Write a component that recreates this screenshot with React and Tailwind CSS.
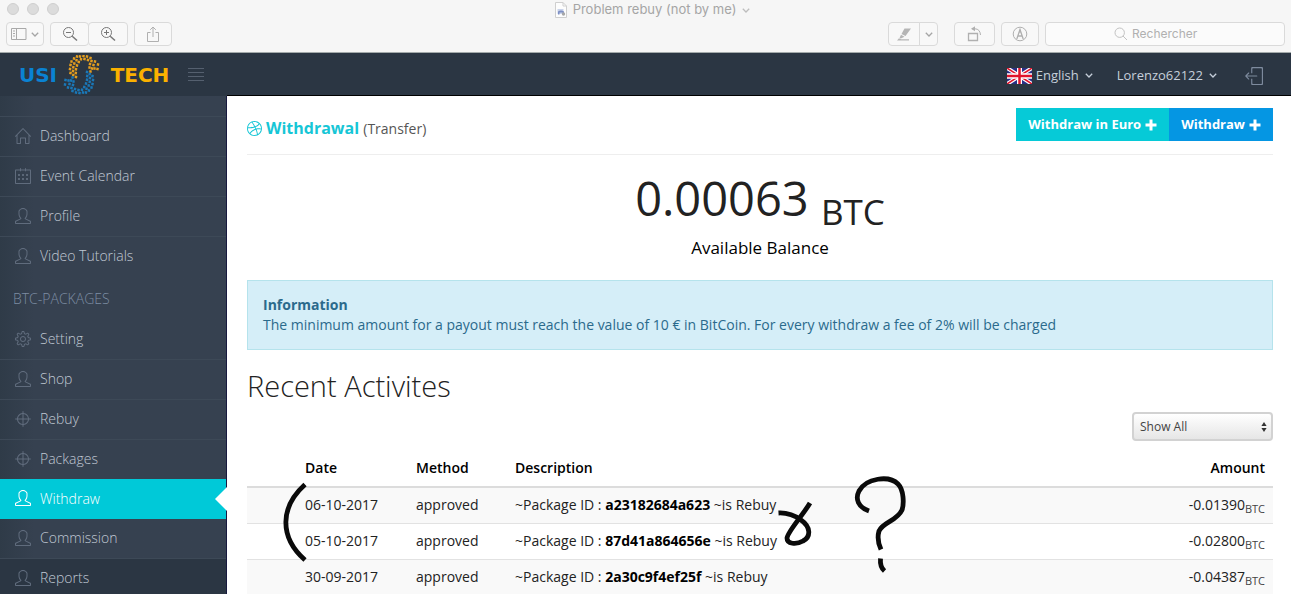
import React from "react";
import {
  SlHome, SlCalender, SlUser, SlSettings, SlTarget, SlSocialDribbble, SlLogout,
} from "react-icons/sl";

function ToolButton({ label, className, children }) {
  return (
    <button
      aria-label={label}
      className={`flex h-6 items-center justify-center rounded border border-[#dadada] bg-[#f8f8f8] ${className}`}
    >
      {children}
    </button>
  );
}

function Chevron({ className }) {
  return (
    <svg viewBox="0 0 8 5" className={`h-[5px] w-2 ${className || ""}`} fill="none" stroke="currentColor" strokeWidth="1.3">
      <path d="M0.8 0.8 L4 4 L7.2 0.8" />
    </svg>
  );
}

function Plus() {
  return (
    <svg viewBox="0 0 12 12" className="size-3" fill="currentColor">
      <path d="M4.500 0.500 h3 v4 h4 v3 h-4 v4 h-3 v-4 h-4 v-3 h4 z" />
    </svg>
  );
}

function WindowBar() {
  return (
    <header className="border-b border-[#a4abab] bg-[#f6f6f6] font-[Inter,sans-serif] text-[13px] text-[#a5a5a5]">
      <div className="flex h-[18px] items-center px-[7px]">
        <div className="flex flex-1 gap-2">
          <span className="size-3 rounded-full border border-[#cfcfcf] bg-[#dcdcdc]" />
          <span className="size-3 rounded-full border border-[#cfcfcf] bg-[#dcdcdc]" />
          <span className="size-3 rounded-full border border-[#cfcfcf] bg-[#dcdcdc]" />
        </div>
        <div className="flex items-center gap-1.5 pl-3.5 pt-0.5">
          <svg viewBox="0 0 12 16" className="h-4 w-3">
            <path d="M0.5 0.5 H8 L11.5 4 V15.500 H0.5 Z" fill="#fdfdfd" stroke="#cfcfcf" />
            <path d="M8 0.500 V4 H11.500" fill="none" stroke="#cfcfcf" />
            <path d="M2.500 7 h6 v5 h-6 z" fill="#c9d3ea" />
            <path d="M3 9.500 q3 -2 6 0 v2 h-1.500 v-1 h-3 v2 h-1.500 z" fill="#7d8fc4" />
            <circle cx="8.500" cy="12" r="1.700" fill="#a8a8a8" />
          </svg>
          <span>Problem rebuy (not by me)</span>
          <Chevron className="text-[#bdbdbd]" />
        </div>
        <div className="flex-1" />
      </div>
      <div className="flex h-[34px] items-start px-1.5 pt-1">
        <ToolButton label="Sidebar" className="w-[38px] gap-1">
          <svg viewBox="0 0 16 12" className="h-3 w-4" fill="none" stroke="#a9a9a9">
            <path d="M0.5 0.500 h14.500 v11 h-14.500 z M5.500 0.500 v11 M2 3 h2 M2 5.500 h2 M2 8 h2" />
          </svg>
          <Chevron />
        </ToolButton>
        <div className="ml-1.5 flex">
          <ToolButton label="Zoom out" className="w-[39px]">
            <svg viewBox="0 0 16 16" className="size-4" fill="none" stroke="#777">
              <circle cx="6.500" cy="6.500" r="5" /><path d="M4 6.500 h5" /><path d="M10.200 10.200 L15 14.500" strokeWidth="1.500" />
            </svg>
          </ToolButton>
          <ToolButton label="Zoom in" className="-ml-px w-10">
            <svg viewBox="0 0 16 16" className="size-4" fill="none" stroke="#777">
              <circle cx="6.500" cy="6.500" r="5" /><path d="M4 6.500 h5 M6.500 4 v5" /><path d="M10.200 10.200 L15 14.500" strokeWidth="1.500" />
            </svg>
          </ToolButton>
        </div>
        <ToolButton label="Share" className="ml-1.5 w-[38px]">
          <svg viewBox="0 0 12 16" className="h-4 w-3" fill="none" stroke="#b0b0b0">
            <path d="M3.500 6.500 H0.500 V15.500 H11.500 V6.500 H8.500 M6 11 V1.200 M3.200 3.800 L6 1 L8.800 3.800" />
          </svg>
        </ToolButton>
        <div className="flex-1" />
        <div className="flex">
          <ToolButton label="Highlight" className="w-8 rounded-r-none">
            <svg viewBox="0 0 16 13" className="h-[13px] w-4" fill="#b5b5b5">
              <path d="M8.500 0.500 H15 L9.500 8 L5.500 6 Z M5 6.800 L8.500 8.700 L4.800 10.500 L3.600 9.800 Z M3 10.300 L5 11.200 H13 V12.500 H1 Z" />
            </svg>
          </ToolButton>
          <ToolButton label="Highlight colours" className="-ml-px w-[19px] rounded-l-none">
            <Chevron />
          </ToolButton>
        </div>
        <ToolButton label="Rotate" className="ml-4 w-[41px]">
          <svg viewBox="0 0 16 16" className="size-4" fill="none" stroke="#b0b0b0">
            <path d="M1.500 7.500 h9 v7 h-9 z" strokeWidth="1.300" />
            <path d="M5 2.800 H8 Q13 3 13.500 9" />
            <path d="M4 2.800 L8 0.300 V5.300 Z" fill="#b0b0b0" stroke="none" />
          </svg>
        </ToolButton>
        <ToolButton label="Annotate" className="ml-1.5 w-[38px]">
          <svg viewBox="0 0 16 16" className="size-4" fill="none" stroke="#b0b0b0">
            <circle cx="8" cy="8" r="6.800" />
            <path d="M4.800 13 L8 3.500 L11.200 13 M6 10 H10" strokeWidth="1.300" />
            <path d="M6.800 6.500 L8 3 L9.200 6.500 Z" fill="#b0b0b0" stroke="none" />
          </svg>
        </ToolButton>
        <label className="ml-1.5 flex h-6 w-60 items-center justify-center gap-1 rounded border border-[#dadada] bg-[#fbfbfb]">
          <svg viewBox="0 0 14 14" className="size-3.5" fill="none" stroke="#c2c2c2">
            <circle cx="5.700" cy="5.700" r="4.700" /><path d="M9 9 L13 13" />
          </svg>
          <input aria-label="Rechercher" placeholder="Rechercher" className="w-[84px] bg-transparent text-[12px] outline-none placeholder:text-[#b0b0b0]" />
        </label>
      </div>
    </header>
  );
}

const swirl = [
  [70.5, 71], [70, 67], [70.5, 63], [71.5, 59.5], [74, 56.5], [77, 54.5],
  [73.3, 73], [73, 69], [73.3, 65.2], [74.3, 61.5], [76.5, 58.2], [80, 54.5],
  [76, 75], [75.8, 71], [76, 67.3], [77, 63.5], [78.8, 60], [81, 57.2],
  [83.500, 54], [87, 54.500], [90.500, 56], [84.500, 57], [88, 58], [91.500, 59], [95, 59.500],
  [90, 62], [93.500, 63], [98, 62.500], [97.500, 67], [92, 66.500], [89.500, 65.500], [90.500, 69.500], [94.500, 66.500],
];

function Swirl({ fill, transform }) {
  return (
    <g fill={fill} transform={transform}>
      {swirl.map(([x, y], i) => (
        <rect key={i} x={x - 1.2} y={y - 1.3} width="2.4" height="2.6" transform={`rotate(10 ${x} ${y})`} />
      ))}
    </g>
  );
}

function Logo() {
  return (
    <a href="#" aria-label="USI TECH" className="flex h-[43px] items-center font-['DejaVu_Sans',sans-serif] text-[20px] font-bold leading-none">
      <span className="w-11 text-center text-[#0a82d2]">USI</span>
      <svg viewBox="62 53 40 40" className="ml-0.5 size-10">
        <Swirl fill="#e39d1f" />
        <Swirl fill="#1a78b8" transform="rotate(180 81.5 72.500)" />
      </svg>
      <span className="w-[76px] text-center text-[#fbb100]">TECH</span>
    </a>
  );
}

function Flag() {
  return (
    <svg viewBox="0 0 60 36" preserveAspectRatio="none" className="h-4 w-[25px]">
      <rect width="60" height="36" fill="#2a2f86" />
      <path d="M0 0 L60 36 M60 0 L0 36" stroke="#fff" strokeWidth="9" />
      <path d="M0 0 L60 36 M60 0 L0 36" stroke="#e0142c" strokeWidth="3.500" />
      <path d="M30 0 V36 M0 18 H60" stroke="#fff" strokeWidth="12" />
      <path d="M30 0 V36 M0 18 H60" stroke="#e0142c" strokeWidth="6" />
    </svg>
  );
}

function TopBar() {
  return (
    <div className="flex h-[43px] items-center bg-[#2b3643] pl-4 text-[13px] text-[#c6cfda]">
      <Logo />
      <button aria-label="Toggle menu" className="ml-2.5 flex w-4 flex-col gap-[3px]">
        <span className="h-px w-full bg-[#55606f]" />
        <span className="h-px w-full bg-[#55606f]" />
        <span className="h-px w-full bg-[#55606f]" />
        <span className="h-px w-full bg-[#55606f]" />
      </button>
      <div className="ml-auto flex items-center pr-7 pt-0.5">
        <button className="flex items-center gap-1"><Flag /><span>English</span><Chevron className="ml-0.5" /></button>
        <button className="ml-6 flex items-center gap-1.5"><span>Lorenzo62122</span><Chevron /></button>
        <button aria-label="Log out" className="ml-7"><SlLogout className="size-[18px] text-[#7e8b9e]" /></button>
      </div>
    </div>
  );
}

function NavItem({ icon: Icon, label, active, dark, last }) {
  const tone = active
    ? "-mt-px bg-[#00c9d8] text-white"
    : `border-b text-[#c0c8d3] ${last ? "border-transparent" : "border-[#3d4957]"} ${dark ? "bg-[#2b3643]" : ""}`;
  return (
    <li>
      <a href="#" className={`relative flex h-10 items-center gap-[9px] pb-0.5 pl-[15px] leading-[25px] ${tone}`}>
        <Icon className={`size-4 ${active ? "text-white" : "text-[#606c7d]"}`} />
        <span>{label}</span>
        {active && (
          <svg viewBox="0 0 12 24" className="absolute -right-px top-2 h-6 w-3"><path d="M12 0 V24 L0 12 Z" fill="#fff" /></svg>
        )}
      </a>
    </li>
  );
}

function Sidebar() {
  return (
    <nav className="w-[227px] shrink-0 border-r border-[#17193f] bg-[#364150] bg-gradient-to-r from-[#2f3b48] to-[#364150] to-15% pt-5 text-[14px] font-light">
      <ul className="border-t border-[#3d4957]">
        <NavItem icon={SlHome} label="Dashboard" />
        <NavItem icon={SlCalender} label="Event Calendar" />
        <NavItem icon={SlUser} label="Profile" />
        <NavItem icon={SlUser} label="Video Tutorials" last />
      </ul>
      <h3 className="px-[13px] pb-[11px] pt-3 leading-5 text-[#7d8da3]">BTC-PACKAGES</h3>
      <ul>
        <NavItem icon={SlSettings} label="Setting" />
        <NavItem icon={SlUser} label="Shop" />
        <NavItem icon={SlTarget} label="Rebuy" />
        <NavItem icon={SlTarget} label="Packages" last />
        <NavItem icon={SlUser} label="Withdraw" active />
        <NavItem icon={SlUser} label="Commission" />
        <NavItem icon={SlUser} label="Reports" dark />
      </ul>
    </nav>
  );
}

const rows = [
  { date: "06-10-2017", id: "a23182684a623", amount: "-0.01390" },
  { date: "05-10-2017", id: "87d41a864656e", amount: "-0.02800" },
  { date: "30-09-2017", id: "2a30c9f4ef25f", amount: "-0.04387" },
];

function Activities() {
  return (
    <div className="relative mt-[9px]">
      <table className="w-full table-fixed text-left text-[14px] leading-5 text-[#222]">
        <thead>
          <tr className="border-b-2 border-[#dcdcdc] text-black">
            <th className="w-[50px] p-2" />
            <th className="w-[111px] p-2 font-semibold">Date</th>
            <th className="w-[99px] p-2 font-semibold">Method</th>
            <th className="p-2 font-semibold">Description</th>
            <th className="w-32 p-2 text-right font-semibold">Amount</th>
          </tr>
        </thead>
        <tbody>
          {rows.map((r) => (
            <tr key={r.id} className="h-9 border-b border-[#e2e2e2] odd:bg-[#f9f9f9]">
              <td />
              <td className="px-2">{r.date}</td>
              <td className="px-2">approved</td>
              <td className="px-2">~Package ID : <b className="text-black">{r.id}</b> ~is Rebuy</td>
              <td className="px-2 text-right">{r.amount}<sub className="text-[11px] text-[#444]">BTC</sub></td>
            </tr>
          ))}
        </tbody>
      </table>
      <svg viewBox="247 450 680 145" className="pointer-events-none absolute left-0 top-0 h-[145px] w-[680px]" fill="none" stroke="#0a0a0a" strokeWidth="4.800">
        <path d="M305 484.500 C280 507 279 537 305 560" />
        <path d="M778.500 513 C787 512.500 796 516 801 520 C811 527 811 537 803 541 C796 545 787 544 787 538 C788 531 803 515 810 503" />
        <path d="M869 511 C858 507 855 499 859 491 C866 478 889 475 898 484 C904 490 904 504 902 510 C897 521 883 522 879 531 C877 538 878 543 881 549.500" />
        <path d="M880.500 558.500 C880 564 881 568 884.500 571" />
      </svg>
    </div>
  );
}

export default function App() {
  return (
    <div className="flex h-screen flex-col overflow-hidden bg-white font-['Open_Sans',sans-serif]">
      <WindowBar />
      <TopBar />
      <div className="flex min-h-0 flex-1">
        <Sidebar />
        <main className="-mt-px min-w-0 flex-1 border-t border-black bg-white pl-5 pr-[18px] pt-3">
          <div className="flex items-start justify-between border-b border-[#eee] pb-[13px]">
            <h1 className="flex items-center gap-1 pt-2 text-[16px] font-bold leading-6 text-[#16c6d6]">
              <SlSocialDribbble className="size-[15px]" />
              <span>Withdrawal <small className="text-[14px] font-normal text-[#555]">(Transfer)</small></span>
            </h1>
            <div className="flex text-[13px] font-bold text-white">
              <button className="flex h-[33px] items-center gap-1 bg-[#06cad7] px-3">Withdraw in Euro <Plus /></button>
              <button className="flex h-[33px] items-center gap-1 bg-[#0596e3] px-3">Withdraw <Plus /></button>
            </div>
          </div>
          <div className="pt-3 text-center">
            <div className="text-[47px] leading-[62px] text-[#222]">0.00063 <sub className="text-[35px] leading-none">BTC</sub></div>
            <div className="pt-[7px] text-[17px] leading-6 text-black">Available Balance</div>
          </div>
          <div className="mt-5 border border-[#b5e3ec] bg-[#d5eef8] px-[15px] py-[14px] text-[14px] leading-5 text-[#2b6a8c]">
            <strong className="block">Information</strong>
            <p>The minimum amount for a payout must reach the value of 10 € in BitCoin. For every withdraw a fee of 2% will be charged</p>
          </div>
          <h2 className="mt-5 text-[29px] font-light leading-8 text-[#222]">Recent Activites</h2>
          <div className="mt-2.5 flex justify-end">
            <div className="relative">
              <select aria-label="Filter" className="h-[29px] w-[141px] appearance-none rounded border-2 border-[#d2d2d2] bg-gradient-to-b from-white to-[#e6e6e6] px-1.5 text-[12px] text-[#444]">
                <option>Show All</option>
              </select>
              <svg viewBox="0 0 6 10" className="pointer-events-none absolute right-1.5 top-[10px] h-2.5 w-1.5" fill="#333"><path d="M3 0 L5.600 4 H0.400 Z M3 10 L5.600 6 H0.400 Z" /></svg>
            </div>
          </div>
          <Activities />
        </main>
      </div>
    </div>
  );
}
